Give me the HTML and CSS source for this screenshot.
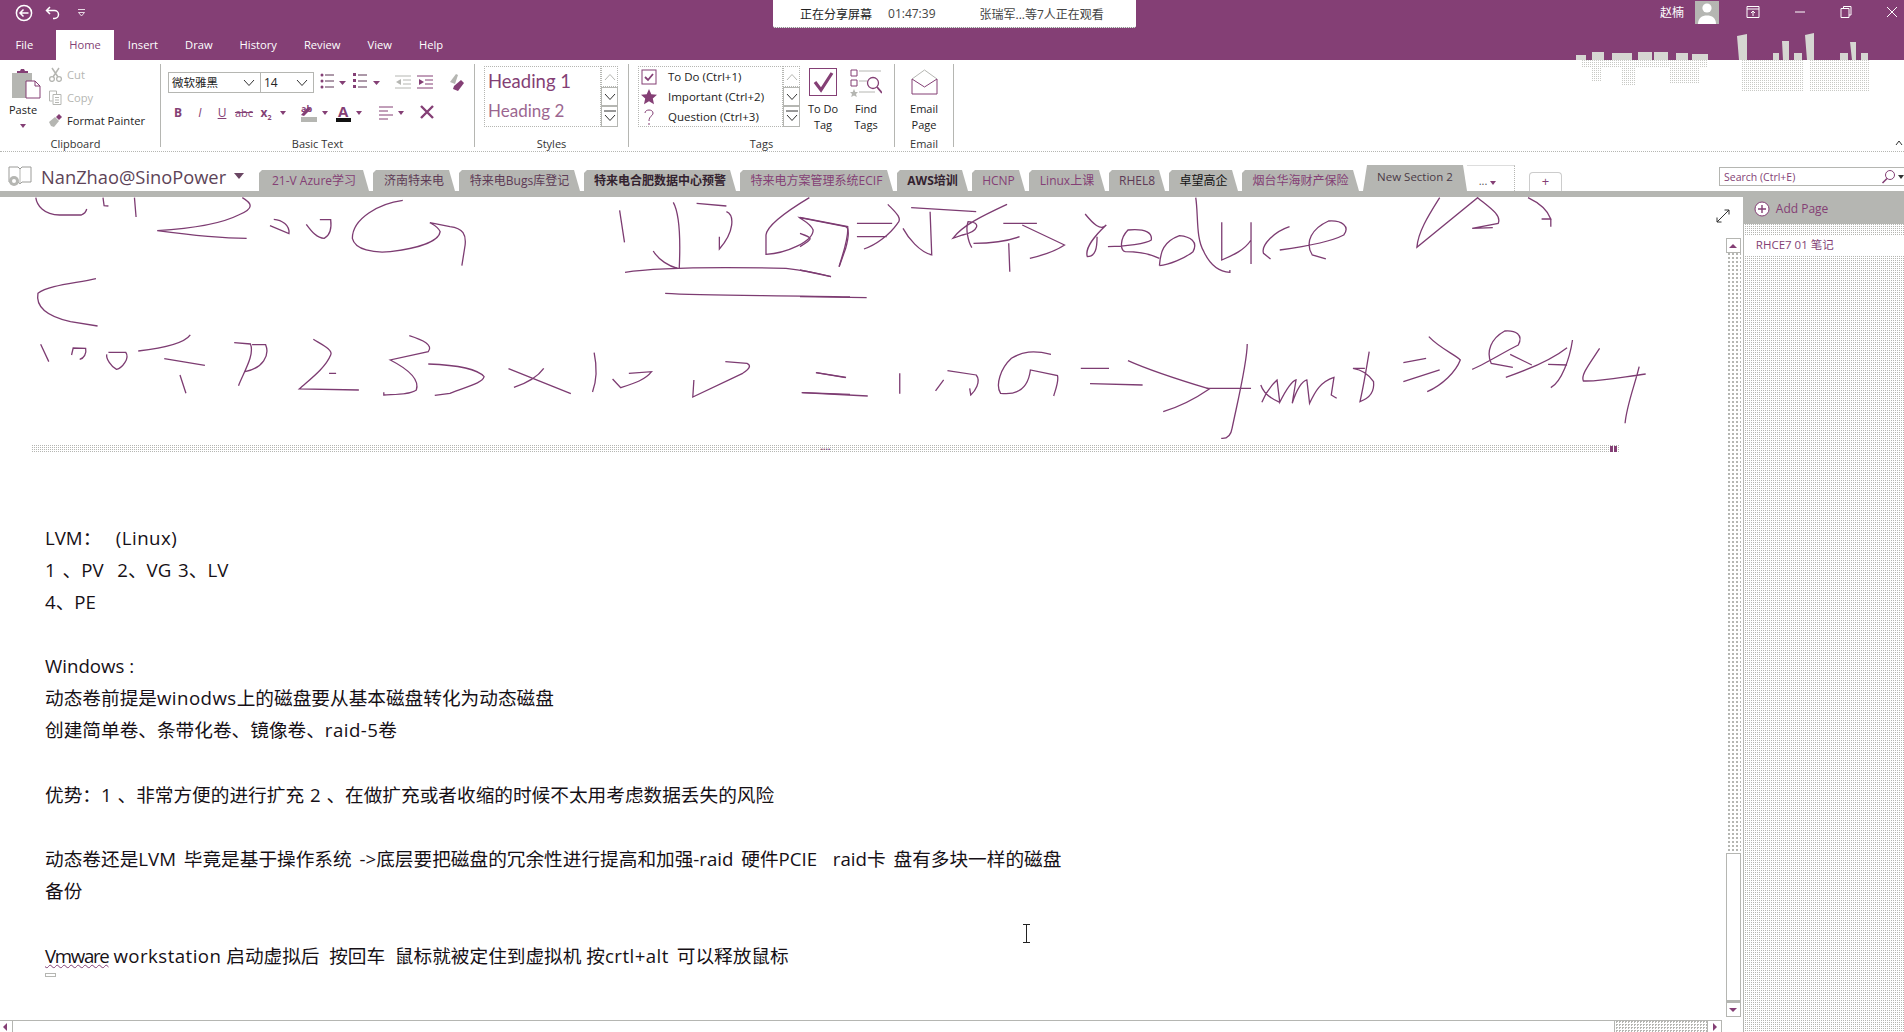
FILE: index.html
```html
<!DOCTYPE html>
<html lang="zh-CN">
  <head>
    <meta charset="UTF-8" />
    <title>RHCE7 01 笔记 - OneNote</title>
    <link rel="stylesheet" href="styles.css">
  </head>
  <body>
    <!-- title bar -->
    <div class="titlebar">
      <div class="quick">
        <svg class="qa-back" width="18" height="18" viewBox="0 0 18 18"><circle cx="9" cy="9" r="7.6"/><path d="M13.5 9H5.5M8.5 5.5 5 9l3.5 3.5"/></svg>
        <svg class="qa-undo" width="16" height="16" viewBox="0 0 16 16"><path d="M5 2 1.5 5.5 5 9M2 5.5h7.5a4 4 0 0 1 0 8H8"/></svg>
        <svg class="qa-more" width="10" height="10" viewBox="0 0 10 10"><path d="M1 1.5h7M1.5 4.5 4.5 8l3-3.5z"/></svg>
      </div>
      <div class="winside">
        <span class="username">赵楠</span>
        <svg class="avatar" width="24" height="23" viewBox="0 0 24 23"><rect width="24" height="23" fill="#b5b6b2"/><circle cx="12" cy="7" r="4.6" fill="#fff"/><path d="M3 23c0-6 4-8.500 9-8.500s9 2.500 9 8.500z" fill="#fff"/></svg>
        <svg class="wbtn wbtn-first" width="14" height="14" viewBox="0 0 14 14"><path d="M1 1.500h12v11H1zM1 4h12M7 11V6M5 8l2-2 2 2"/></svg>
        <svg class="wbtn" width="12" height="14" viewBox="0 0 12 14"><path d="M1 7h10"/></svg>
        <svg class="wbtn" width="12" height="14" viewBox="0 0 12 14"><path d="M1 3.500h8v9H1zM3.500 3.500V1.500H11v8.500H9"/></svg>
        <svg class="wbtn" width="12" height="14" viewBox="0 0 12 14"><path d="M1 2l10 10M11 2 1 12"/></svg>
      </div>
    </div>
    <div class="share">
      <span class="share-a">正在分享屏幕</span>
      <span class="share-b">01:47:39</span>
      <span class="share-c">张瑞军...等7人正在观看</span>
    </div>
    <svg class="watermark" width="310" height="64" viewBox="0 0 310 64">
      <defs>
        <pattern id="wm" width="2" height="2" patternUnits="userSpaceOnUse"><rect width="1" height="1" fill="#c8c9c5"/></pattern>
      </defs>
      <g fill="#d6d6d2">
        <path d="M167 6l10-2v26h-8zM212 11h7v19h-6zM203 23h6v7h-6zM224 23h8v7h-8zM235 5l9-2v27h-7zM270 23h8v7h-8zM280 12h6v18h-4zM291 23h7v7h-7z"/>
        <path d="M6 25h10v5H6zM22 22h12v8H22zM42 23h20v7H42zM68 22h14v8H68zM84 22h14v8H84zM106 23h12v7h-12zM122 24h16v6h-16z"/>
      </g>
      <g fill="url(#wm)">
        <path d="M171 30h62v32h-62zM240 30h60v32h-60z"/>
        <path d="M12 30h126v7H12zM22 37h10v14H22zM52 37h14v18H52zM100 37h30v16h-30z"/>
      </g>
    </svg>

    <nav class="menubar">
      <a class="menu menu-file">File</a>
      <a class="menu menu-active">Home</a>
      <a class="menu">Insert</a>
      <a class="menu">Draw</a>
      <a class="menu">History</a>
      <a class="menu">Review</a>
      <a class="menu">View</a>
      <a class="menu">Help</a>
    </nav>

    <!-- ribbon -->
    <div class="ribbon">
      <section class="group group-clip">
        <div class="group-body">
          <div class="paste">
            <svg width="30" height="31" viewBox="0 0 30 31">
              <rect x="1" y="5" width="20" height="25" fill="#b5b6b2"/>
              <path d="M6 5V3h3l1-2h3l1 2h3v2z" fill="#843f75"/>
              <path d="M15 13h9l5 5v12H15z" fill="#fff" stroke="#843f75"/>
              <path d="M24 13v5h5" fill="none" stroke="#843f75"/>
            </svg>
            <span class="paste-label">Paste</span>
            <i class="caret caret-paste"></i>
          </div>
          <div class="clip-list">
            <div class="clip-row is-off">
              <svg width="15" height="15" viewBox="0 0 15 15"><path d="M4 1l6 9M11 1 5 10" stroke="#b5b6b2" stroke-width="1.500" fill="none"/><circle cx="4" cy="12" r="2.400" fill="none" stroke="#b5b6b2" stroke-width="1.300"/><circle cx="11" cy="12" r="2.400" fill="none" stroke="#b5b6b2" stroke-width="1.300"/></svg>
              <span>Cut</span>
            </div>
            <div class="clip-row is-off">
              <svg width="15" height="15" viewBox="0 0 15 15"><path d="M1.500 1h7v3M1.500 1v10h3M5 4.500h8v10H5zM7 7.500h4M7 10h4M7 12.500h4" fill="none" stroke="#b5b6b2"/></svg>
              <span>Copy</span>
            </div>
            <div class="clip-row">
              <svg width="15" height="15" viewBox="0 0 15 15"><path d="M1 9l6-5 4 4-5 6-3-1z" fill="#b5b6b2"/><path d="M8 4l3-3 3 3-3 3z" fill="#843f75"/></svg>
              <span>Format Painter</span>
            </div>
          </div>
        </div>
        <div class="group-label label-clip">Clipboard</div>
      </section>

      <section class="group group-text">
        <div class="group-body text-body">
          <div class="text-row1">
            <div class="combo combo-font"><span>微软雅黑</span><svg width="12" height="8" viewBox="0 0 12 8"><path d="M1 1l5 5.500L11 1"/></svg></div>
            <div class="combo combo-size"><span>14</span><svg width="12" height="8" viewBox="0 0 12 8"><path d="M1 1l5 5.500L11 1"/></svg></div>
            <svg class="strip" width="146" height="21" viewBox="0 0 146 21">
              <g fill="#843f75">
                <circle cx="2" cy="3" r="1.500"/><circle cx="2" cy="9" r="1.500"/><circle cx="2" cy="15" r="1.500"/>
                <path d="M19 9h7l-3.500 4zM53 9h7l-3.500 4z"/>
                <rect x="33" y="1" width="3" height="3"/><rect x="33" y="7" width="3" height="3"/><rect x="33" y="13" width="3" height="3"/>
              </g>
              <path d="M5 3h9M5 9h9M5 15h9M38 3h9M38 9h9M38 15h9" stroke="#5b3352"/>
              <path d="M75 4h16M83 8h8M83 12h8M75 16h16" stroke="#b5b6b2"/>
              <path d="M81 7 76 10l5 3z" fill="#b5b6b2"/>
              <path d="M97 4h16M105 8h8M105 12h8M97 16h16" stroke="#843f75"/>
              <path d="M99 7l5 3-5 3z" fill="#843f75"/>
              <path d="M130 10l6-8 2 1-3 9z" fill="#b5b6b2"/>
              <path d="M134 14l7-6 3 3-6 8-5-2z" fill="#843f75"/>
            </svg>
          </div>
          <div class="text-row2">
            <span class="fmt fmt-b">B</span>
            <span class="fmt fmt-i">I</span>
            <span class="fmt fmt-u">U</span>
            <span class="fmt fmt-s">abc</span>
            <span class="fmt fmt-x">x<sub>2</sub></span>
            <svg class="strip strip-tall" width="162" height="30" viewBox="0 -10 162 30">
              <g fill="#843f75">
                <path d="M3 7h6l-3 4zM45 7h6l-3 4zM79 7h6l-3 4zM121 7h6l-3 4z"/>
                <path d="M31 3l3 2-7 7-3-1z"/>
              </g>
              <rect x="24" y="13" width="16" height="5" fill="#b5b6b2"/>
              <text x="24" y="8" class="strip-txt">ab</text>
              <text x="61" y="13" class="strip-a">A</text>
              <rect x="59" y="14" width="15" height="4" fill="#111"/>
              <path d="M102 3h14M102 7h9M102 11h14M102 15h9" stroke="#843f75"/>
              <path d="M144 2l12 12M156 2l-12 12" stroke="#843f75" stroke-width="2.400"/>
            </svg>
          </div>
        </div>
        <div class="group-label">Basic Text</div>
      </section>

      <section class="group group-styles">
        <div class="group-body gallery-wrap">
          <div class="gallery gallery-styles">
            <div class="h1">Heading 1</div>
            <div class="h2">Heading 2</div>
          </div>
          <div class="spin">
            <div class="spin-up"><svg width="12" height="8" viewBox="0 0 12 8"><path d="M1 7l5-5.500L11 7"/></svg></div>
            <div class="spin-dn"><svg width="12" height="8" viewBox="0 0 12 8"><path d="M1 1l5 5.500L11 1"/></svg></div>
            <div class="spin-more"><svg width="12" height="13" viewBox="0 0 12 13"><path d="M0 1h12M1 5l5 5.500L11 5"/></svg></div>
          </div>
        </div>
        <div class="group-label">Styles</div>
      </section>

      <section class="group group-tags">
        <div class="group-body">
          <div class="gallery-wrap tag-wrap">
            <div class="gallery gallery-tags">
              <div class="tag-row">
                <svg width="16" height="16" viewBox="0 0 16 16"><rect x="1" y="1" width="14" height="14" fill="#fff" stroke="#843f75"/><path d="M4 8l3 3 5-6" fill="none" stroke="#843f75" stroke-width="1.800"/></svg>
                <span>To Do (Ctrl+1)</span>
              </div>
              <div class="tag-row">
                <svg width="16" height="16" viewBox="0 0 16 16"><path d="M8 0l2.300 5.200 5.700.6-4.200 3.800L13 15.200 8 12.300 3 15.200l1.200-5.600L0 5.800l5.700-.6z" fill="#843f75"/></svg>
                <span>Important (Ctrl+2)</span>
              </div>
              <div class="tag-row">
                <svg width="16" height="16" viewBox="0 0 16 16"><path d="M4 4c0-4 8-4 8 0 0 3-4 3-4 8M8 14v2" fill="none" stroke="#843f75"/></svg>
                <span>Question (Ctrl+3)</span>
              </div>
            </div>
            <div class="spin">
              <div class="spin-up"><svg width="12" height="8" viewBox="0 0 12 8"><path d="M1 7l5-5.500L11 7"/></svg></div>
              <div class="spin-dn"><svg width="12" height="8" viewBox="0 0 12 8"><path d="M1 1l5 5.500L11 1"/></svg></div>
              <div class="spin-more"><svg width="12" height="13" viewBox="0 0 12 13"><path d="M0 1h12M1 5l5 5.500L11 5"/></svg></div>
            </div>
          </div>
          <div class="big-btn btn-todo">
            <svg width="28" height="28" viewBox="0 0 28 28"><rect x=".5" y=".5" width="27" height="27" fill="#fff" stroke="#843f75"/><path d="M6 14l6 8L23 5" fill="none" stroke="#843f75" stroke-width="3.200"/></svg>
            <span>To Do<br>Tag</span>
          </div>
          <div class="big-btn btn-find">
            <svg width="32" height="30" viewBox="0 0 32 30">
              <path d="M1 3h6v6H1zM1 13h6v6H1z" fill="#fff" stroke="#843f75"/>
              <path d="M9 4h22M9 14h8M9 25h16" stroke="#b5b6b2"/>
              <path d="M4 22l1.300 3H8l-2 2 .8 3L4 28.500 1.200 30 2 27l-2-2h2.700z" fill="#b5b6b2"/>
              <circle cx="23" cy="16" r="5.500" fill="#fff" stroke="#843f75" stroke-width="1.300"/>
              <path d="M27 20l5 6" stroke="#843f75" stroke-width="1.800"/>
            </svg>
            <span>Find<br>Tags</span>
          </div>
        </div>
        <div class="group-label">Tags</div>
      </section>

      <section class="group group-email">
        <div class="group-body">
          <div class="big-btn btn-email">
            <svg width="27" height="26" viewBox="0 0 27 26"><path d="M1 10 13.500 1 26 10" fill="none" stroke="#b5b6b2"/><path d="M1 10v15h25V10" fill="none" stroke="#843f75"/><path d="M1 10l12.500 8L26 10" fill="none" stroke="#843f75"/></svg>
            <span>Email<br>Page</span>
          </div>
        </div>
        <div class="group-label">Email</div>
      </section>
      <div class="ribbon-rest">
        <svg width="8" height="6" viewBox="0 0 8 6"><path d="M1 5l3-4 3 4" fill="none" stroke="#333"/></svg>
      </div>
    </div>

    <!-- notebook + section tabs -->
    <div class="notebar">
      <div class="notebook">
        <svg width="24" height="22" viewBox="0 0 24 22"><path d="M1 2h9l2 2 2-2h9v15H14l-2 2-2-2H1z" fill="#fff" stroke="#9b9b98"/><path d="M12 4v15" stroke="#b5b6b2"/><circle cx="6" cy="16" r="5" fill="#b5b6b2"/><circle cx="6" cy="16" r="2" fill="#fff"/></svg>
        <span class="nb-name">NanZhao@SinoPower</span>
        <i class="caret caret-nb"></i>
      </div>
      <div class="sections">
        <div class="sec sec-p">21-V Azure学习</div>
        <div class="sec sec-d">济南特来电</div>
        <div class="sec sec-d">特来电Bugs库登记</div>
        <div class="sec sec-k">特来电合肥数据中心预警</div>
        <div class="sec sec-p">特来电方案管理系统ECIF</div>
        <div class="sec sec-k">AWS培训</div>
        <div class="sec sec-p">HCNP</div>
        <div class="sec sec-p">Linux上课</div>
        <div class="sec sec-d">RHEL8</div>
        <div class="sec sec-b">卓望高企</div>
        <div class="sec sec-p">烟台华海财产保险</div>
        <div class="sec sec-cur">New Section 2</div>
        <div class="sec-more">... <i class="caret"></i></div>
        <div class="sec-add">+</div>
      </div>
      <div class="search">
        <span>Search (Ctrl+E)</span>
        <svg width="15" height="15" viewBox="0 0 15 15"><circle cx="9" cy="6" r="4.500" fill="none" stroke="#843f75"/><path d="M6 9.500 1.500 14" stroke="#843f75" stroke-width="1.600"/></svg>
        <i class="caret caret-search"></i>
      </div>
    </div>
    <div class="band"></div>

    <div class="main">
      <div class="doc">
        <svg class="ink" width="1726" height="248" viewBox="0 197 1726 248">
          <g transform="translate(0 195) scale(.5421 .3333)">
            <path d="M66 8C68 30 80 60 110 60L150 60Q158 55 160 42M190 8L192 32 200 33M248 8L251 66"/>
            <path d="M447 8C465 25 470 40 440 60 410 85 360 100 290 107 340 118 400 130 455 130"/>
            <path d="M505 73C520 75 535 90 533 116L498 92M565 88C575 110 585 130 598 130 610 120 612 100 610 74L590 74"/>
            <path d="M743 16C700 25 650 70 650 130 655 165 690 175 720 170 770 160 810 140 812 110 808 95 795 85 793 83L830 95C855 100 860 120 858 150L852 212"/>
            <path d="M1143 46L1152 142M1242 22C1255 60 1255 150 1253 220M1205 168C1215 195 1235 215 1250 220M1153 232C1200 220 1300 215 1450 220 1480 225 1510 235 1533 245M1285 25L1340 33M1340 50C1355 60 1355 110 1327 162L1327 125"/>
            <path d="M1493 8C1450 50 1415 90 1413 120L1413 178C1450 175 1500 140 1500 105 1495 85 1480 75 1475 68L1560 95C1568 100 1565 130 1560 160L1548 215"/>
            <path d="M1227 295C1300 303 1450 300 1568 306"/>
            <path d="M177 251C140 265 90 270 70 295 65 340 90 365 130 380L180 393"/>
            <path d="M75 448L90 500M132 480L135 459 158 460C160 475 155 490 147 493M200 472L232 472C240 490 225 520 215 523 205 515 195 490 197 478M255 468C300 460 340 445 351 420M303 491L378 511M332 540L343 595"/>
            <path d="M432 443L462 447C470 480 450 530 440 572M465 449L490 449C498 480 485 520 452 530"/>
            <path d="M578 433C595 450 615 465 610 480 600 520 570 555 552 582L662 585M607 535L620 535"/>
            <path d="M755 422C780 435 800 450 790 470L720 495C750 520 775 550 768 585 755 600 730 598 708 600L708 592"/>
            <path d="M790 507C840 510 880 520 893 545 890 565 860 575 830 595L802 601"/>
            <path d="M938 521L1053 596M1003 520C990 550 970 565 948 577M1096 473C1102 520 1100 560 1093 591"/>
            <path d="M1130 552L1145 578C1170 565 1190 555 1202 530L1160 535M1280 555L1278 606 1370 535C1385 520 1385 510 1378 505L1338 500"/>
            <path d="M1505 533L1560 548M1480 593L1568 598"/>
          </g>
          <g transform="translate(800 195) scale(.5421 .3333)">
            <path d="M0 67L88 95C90 130 80 170 72 215M0 115C25 130 25 130 0 155M0 225L57 245M0 305L123 308"/>
            <path d="M105 85L170 85M105 125L160 125M162 28C175 50 190 70 180 85 165 120 140 150 118 162"/>
            <path d="M205 38L325 50M240 50L243 180C220 170 200 130 190 100"/>
            <path d="M382 28C340 60 300 90 282 130L300 120C330 110 335 80 310 80 305 100 310 140 317 158M320 145C350 145 380 140 405 125M375 85L437 85M385 145L387 230"/>
            <path d="M410 90L488 150C470 170 450 180 424 190"/>
            <path d="M526 57C540 85 555 110 565 90 545 120 525 160 530 185 545 185 548 160 548 125"/>
            <path d="M568 155C600 155 640 145 648 135 650 115 640 100 605 105 590 130 590 165 600 170 630 170 650 180 663 190"/>
            <path d="M663 212C665 170 670 140 700 122 720 125 735 140 725 170 710 190 680 210 663 212M730 8C735 60 730 130 745 170 755 205 770 230 793 232L793 225"/>
            <path d="M778 82L778 195C800 180 820 165 832 135M832 82L832 207"/>
            <path d="M903 95C875 110 850 150 855 175L868 192"/>
            <path d="M885 165C930 155 980 140 1003 120 1015 95 1000 75 975 78 945 100 930 140 945 180L970 192"/>
            <path d="M1180 8C1160 60 1140 110 1138 157L1250 8C1270 35 1295 60 1288 85L1240 100 1278 98M1343 8C1365 25 1380 50 1385 72L1368 72M1385 72L1385 95"/>
            <path d="M30 533L85 547M3 593L125 603M184 535L184 596"/>
            <path d="M250 588L265 555M272 527L325 540C335 560 322 590 315 600L313 580"/>
            <path d="M463 478C430 465 410 470 390 490 370 520 360 570 370 595 395 600 420 590 425 525L475 542C478 560 470 590 468 603"/>
            <path d="M518 520L570 520M535 566L632 570M605 497C650 530 700 555 755 582 730 610 700 635 670 650"/>
            <path d="M825 447C825 500 810 600 797 700 795 720 790 732 777 730M750 580L832 580"/>
            <path d="M850 570C855 595 870 612 885 622M852 622C860 590 870 570 880 555L885 622C895 590 905 560 915 555L908 625C915 590 925 560 935 555L940 625C950 590 960 560 985 547L980 600 990 610"/>
            <path d="M1050 470C1045 520 1040 570 1033 620 1050 610 1060 590 1058 560 1050 540 1040 525 1020 520L1042 520"/>
            <path d="M1113 503L1155 490M1113 560L1180 525M1160 425C1180 460 1210 480 1218 495 1210 530 1185 570 1157 590"/>
            <path d="M1240 523C1260 510 1300 470 1325 450 1335 420 1320 405 1300 408 1275 430 1265 470 1275 505L1315 517"/>
            <path d="M1310 478L1350 510M1302 547C1350 520 1390 490 1415 458M1425 435C1420 490 1405 560 1385 578M1380 508L1415 510"/>
            <path d="M1475 460C1455 510 1440 540 1445 558 1480 560 1520 545 1560 537M1548 515C1540 570 1525 630 1522 685"/>
          </g>
        </svg>
        <div class="dragbar">
          <span></span>
          <span class="drag-dots">....</span>
          <span class="drag-end"><i></i><i></i></span>
        </div>
        <div class="note">
          <p>LVM：   <span class="wide-ltr">(Linux)</span></p>
          <p class="sp-mid">1 、PV  2、VG 3、LV</p>
          <p>4、PE</p>
          <p>&nbsp;</p>
          <p>Windows :</p>
          <p>动态卷前提是<span class="wide-ltr">winodws</span>上的磁盘要从基本磁盘转化为动态磁盘</p>
          <p>创建简单卷、条带化卷、镜像卷、<span class="wide-ltr">raid-5</span>卷</p>
          <p>&nbsp;</p>
          <p class="sp-slim">优势：1 、非常方便的进行扩充 2 、在做扩充或者收缩的时候不太用考虑数据丢失的风险</p>
          <p>&nbsp;</p>
          <p class="sp-wide">动态卷还是LVM 毕竟是基于操作系统 -&gt;底层要把磁盘的冗余性进行提高和加强-raid 硬件PCIE  raid卡 盘有多块一样的磁盘</p>
          <p>备份</p>
          <p>&nbsp;</p>
          <p><span class="typo">Vmware</span> <span class="wk">workstation</span> 启动虚拟后  按回车  鼠标就被定住到虚拟机 按<span class="wide-ltr">crtl+alt</span><span class="sp-wide"> </span>可以释放鼠标</p>
          <div class="note-mark"></div>
        </div>
        <svg class="ibeam" width="9" height="19" viewBox="0 0 9 19"><path d="M1 .5h7M4.500.5v18M1 18.500h7" fill="none" stroke="#222"/></svg>
        <div class="hscroll">
          <div class="hs-left"><i></i></div>
          <div class="hs-thumb"></div>
          <div class="hs-track"></div>
          <div class="hs-right"><i></i></div>
        </div>
      </div>
      <div class="vscroll">
        <svg class="expand" width="14" height="14" viewBox="0 0 14 14"><path d="M13 1 1 13M8.500 1H13v4.500M1 8.500V13h4.500" fill="none" stroke="#333"/></svg>
        <div class="vs-up"><i></i></div>
        <div class="vs-track"></div>
        <div class="vs-thumb"></div>
        <div class="vs-down"><i></i></div>
      </div>
      <aside class="pages">
        <div class="addpage">
          <svg width="16" height="16" viewBox="0 0 16 16"><circle cx="8" cy="8" r="7" fill="#fff" stroke="#843f75"/><path d="M8 4v8M4 8h8" stroke="#843f75" stroke-width="1.400"/></svg>
          <span>Add Page</span>
        </div>
        <div class="pages-strip"></div>
        <div class="page-item">RHCE7 01 笔记</div>
        <div class="pages-rest"></div>
      </aside>
    </div>
  </body>
</html>
```
FILE: styles.css
```css
* {
  box-sizing: border-box;
}
html,
body {
  margin: 0;
  width: 1904px;
  height: 1032px;
  overflow: hidden;
  background: #fff;
}
body {
  position: relative;
  display: flex;
  flex-direction: column;
  font-family: "Open Sans", "Noto Sans CJK SC", sans-serif;
  font-size: 11px;
  color: #222;
}
svg {
  display: block;
  flex: none;
}
.caret {
  display: inline-block;
  width: 0;
  height: 0;
  border-left: 3.5px solid transparent;
  border-right: 3.5px solid transparent;
  border-top: 4px solid #843f75;
}

/* title bar */
.titlebar {
  height: 30px;
  background: #843f75;
  display: flex;
  justify-content: space-between;
  color: #fff;
}
.quick {
  display: flex;
  align-items: center;
  height: 26px;
  padding-left: 15px;
}
.quick svg {
  fill: none;
  stroke: #fff;
  stroke-width: 1.5;
}
.qa-undo {
  margin-left: 12px;
}
.qa-more {
  margin-left: 16px;
}
.qa-more path {
  stroke-width: 0.8;
}
.winside {
  display: flex;
  align-items: center;
  height: 24px;
  padding-right: 6px;
}
.username {
  font-size: 12px;
  margin-right: 11px;
}
.wbtn {
  margin-left: 34px;
  fill: none;
  stroke: #fff;
}
.wbtn-first {
  margin-left: 27px;
}
.share {
  position: absolute;
  left: 773px;
  top: 0;
  width: 363px;
  height: 28px;
  background: #fff;
  border-bottom: 1px dotted #777;
  border-radius: 0 0 2px 2px;
  display: flex;
  align-items: center;
  padding-left: 27px;
  font-size: 12px;
  color: #222;
}
.share-b {
  margin-left: 16px;
  color: #444;
}
.share-c {
  margin-left: 44px;
  color: #444;
}
.watermark {
  position: absolute;
  left: 1570px;
  top: 30px;
}

.menubar {
  height: 30px;
  background: #843f75;
  display: flex;
  padding-left: 2px;
}
.menu {
  padding: 0 13.5px;
  line-height: 30px;
  font-size: 11.2px;
  color: #fff;
}
.menu-file {
  margin-right: 9px;
}
.menu-active {
  background: #fff;
  color: #843f75;
}

/* ribbon */
.ribbon {
  height: 92px;
  display: flex;
  border-bottom: 1px dotted #b5b6b2;
}
.group {
  height: 83px;
  margin-top: 4px;
  display: flex;
  flex-direction: column;
  border-right: 1px solid #b5b6b2;
}
.group-body {
  flex: 1;
  display: flex;
  min-height: 0;
}
.group-label {
  height: 14px;
  line-height: 14px;
  margin-bottom: -4px;
  text-align: center;
  font-size: 11px;
  color: #333;
}
.label-clip {
  padding-right: 9px;
}
.group-clip {
  width: 161px;
}
.group-text {
  width: 314px;
}
.group-styles {
  width: 154px;
}
.group-tags {
  width: 266px;
}
.group-email {
  width: 59px;
}
.ribbon-rest {
  flex: 1;
  display: flex;
  align-items: flex-end;
  justify-content: flex-end;
  padding: 0 1px 5px 0;
  background: radial-gradient(#bbb 0.6px, transparent 0.8px) 0 0 / 13px 8px;
}

/* clipboard */
.paste {
  width: 48px;
  padding: 4px 0 0 11px;
  display: flex;
  flex-direction: column;
}
.paste-label {
  margin: 2px 0 0 -2px;
  line-height: 18px;
  font-size: 11px;
}
.caret-paste {
  margin: 5px 0 0 9px;
  border-left-width: 3px;
  border-right-width: 3px;
}
.clip-list {
  margin-top: -1px;
  font-size: 11.2px;
}
.clip-row {
  height: 23px;
  display: flex;
  align-items: center;
  gap: 4px;
}
.is-off {
  color: #b5b6b2;
}

/* basic text */
.text-body {
  flex-direction: column;
  padding: 8px 0 0 7px;
}
.text-row1 {
  display: flex;
  height: 21px;
}
.combo {
  height: 21px;
  border: 1px solid #b5b6b2;
  display: flex;
  align-items: center;
  justify-content: space-between;
  padding: 0 5px 0 3px;
  font-size: 12px;
  line-height: 15px;
}
.combo svg {
  fill: none;
  stroke: #333;
}
.combo-font {
  width: 93px;
  font-size: 11.500px;
}
.combo-size {
  width: 54px;
  margin-left: -1px;
}
.text-row1 .strip {
  margin-left: 6px;
}
.text-row2 {
  display: flex;
  margin-top: 11px;
  height: 18px;
  margin-left: -1px;
}
.strip-tall {
  margin-top: -10px;
}
.fmt {
  width: 22px;
  text-align: center;
  line-height: 18px;
  font-size: 12px;
  color: #843f75;
}
.fmt sub {
  font-size: 7px;
  line-height: 0;
}
.fmt-b,
.fmt-x {
  font-weight: 700;
}
.fmt-i {
  font-style: italic;
}
.fmt-u {
  text-decoration: underline;
}
.fmt-s {
  text-decoration: line-through;
  font-size: 11px;
}
.strip-txt {
  font: 700 9px "Open Sans", sans-serif;
  fill: #843f75;
}
.strip-a {
  font: 700 15px "Open Sans", sans-serif;
  fill: #843f75;
}

/* galleries */
.gallery-wrap {
  display: flex;
  padding-top: 2px;
}
.group-styles .gallery-wrap {
  padding-left: 9px;
}
.gallery {
  height: 61px;
  border: 1px dotted #b5b6b2;
}
.gallery-styles {
  width: 117px;
  padding-left: 3px;
  color: #843f75;
  font-family: Lato, "Noto Sans CJK SC", sans-serif;
}
.h1 {
  font-size: 18.5px;
  line-height: 28px;
}
.h2 {
  font-size: 17px;
  line-height: 31px;
  opacity: 0.8;
}
.spin {
  width: 17px;
  height: 61px;
  display: flex;
  flex-direction: column;
}
.spin div {
  display: flex;
  align-items: center;
  justify-content: center;
  border: 1px solid #b5b6b2;
}
.spin svg {
  fill: none;
  stroke: #333;
}
.spin .spin-up {
  height: 21px;
  border: 1px dotted #b5b6b2;
}
.spin .spin-up svg {
  stroke: #b5b6b2;
}
.spin-dn {
  height: 19px;
}
.spin-more {
  height: 21px;
}
.tag-wrap {
  padding-left: 9px;
}
.gallery-tags {
  width: 145px;
  padding: 0 0 0 2px;
}
.tag-row {
  height: 20px;
  display: flex;
  align-items: center;
  gap: 11px;
  font-size: 11.5px;
}
.tag-row span {
  margin-top: -2px;
}
.big-btn {
  display: flex;
  flex-direction: column;
  align-items: center;
  line-height: 16px;
  text-align: center;
}
.big-btn svg {
  margin-bottom: 5px;
}
.btn-todo {
  width: 36px;
  margin-left: 5px;
  padding-top: 4px;
}
.btn-find {
  width: 36px;
  margin-left: 7px;
  padding-top: 3px;
}
.btn-find svg {
  margin-bottom: 4px;
}
.btn-email {
  width: 59px;
  padding-top: 5px;
}
.btn-email svg {
  margin-bottom: 6px;
}

/* notebook bar */
.notebar {
  height: 39px;
  display: flex;
  align-items: flex-end;
  position: relative;
}
.notebook {
  width: 259px;
  height: 25px;
  margin-bottom: 2px;
  display: flex;
  align-items: center;
  padding: 0 0 1px 8px;
  color: #5d4458;
}
.nb-name {
  margin-left: 9px;
  font-size: 18.3px;
  white-space: nowrap;
}
.caret-nb {
  margin-left: 8px;
  border-left-width: 5px;
  border-right-width: 5px;
  border-top-width: 6px;
  border-top-color: #6a4663;
}
.sections {
  display: grid;
  grid-template-columns: 110px 82px 121px 152px 153px 71px 53px 76px 56px 69px 117px 104px 44px 33px;
  column-gap: 4px;
  align-items: end;
}
.sec {
  height: 21px;
  line-height: 21px;
  text-align: center;
  background: #b5b6b2;
  font-size: 12px;
  white-space: nowrap;
  clip-path: polygon(0 3px, 3px 0, calc(100% - 6px) 0, 100% 100%, 0 100%);
}
.sec-p {
  color: #843f75;
}
.sec-d {
  color: #5d3a55;
}
.sec-k {
  color: #33222f;
  font-weight: 700;
}
.sec-b {
  color: #111;
}
.sec-cur {
  height: 26px;
  line-height: 24px;
  font-size: 11.500px;
  color: #4a3a46;
  clip-path: polygon(0 100%, 4px 0, calc(100% - 4px) 0, 100% 100%);
}
.sec-more {
  height: 26px;
  margin-left: -4px;
  padding-top: 7px;
  padding-right: 6px;
  text-align: center;
  border-top: 1px solid #ddd;
  border-right: 1px dotted #b5b6b2;
  font-size: 11px;
  color: #555;
}
.sec-add {
  height: 19px;
  margin-left: 10px;
  width: 33px;
  border: 1px solid #ccc;
  border-bottom: 0;
  border-radius: 4px 4px 0 0;
  line-height: 17px;
  text-align: center;
  color: #843f75;
  font-size: 13px;
}
.search {
  position: absolute;
  left: 1719px;
  top: 15px;
  width: 185px;
  height: 19px;
  border: 1px solid #b5b6b2;
  border-right: 0;
  display: flex;
  align-items: center;
  padding-left: 4px;
  color: #843f75;
  font-size: 10.500px;
}
.search svg {
  margin-left: auto;
}
.caret-search {
  margin: 0 0 0 2px;
  border-top-color: #333;
}
.band {
  height: 6px;
  background: #b5b6b2;
}

/* page area */
.main {
  flex: 1;
  display: flex;
  min-height: 0;
}
.doc {
  width: 1726px;
  position: relative;
  display: flex;
  flex-direction: column;
}
.ink {
  fill: none;
  stroke: #7d3c72;
  stroke-width: 1.3;
}
.ink path {
  vector-effect: non-scaling-stroke;
}
.dragbar {
  margin-left: 31px;
  width: 1589px;
  height: 8px;
  display: grid;
  grid-template-columns: 1fr auto 1fr;
  align-items: center;
  background: conic-gradient(#b5b6b2 25%, #fff 0) 0 0 / 2px 2px;
}
.drag-dots {
  color: #843f75;
  font: 700 9px/2px "Liberation Sans", sans-serif;
  padding-bottom: 5px;
}
.drag-end {
  justify-self: end;
  display: flex;
  gap: 1px;
  padding-right: 3px;
}
.drag-end i {
  width: 3px;
  height: 6px;
  background: #843f75;
}
.note {
  flex: 1;
  min-height: 0;
  padding: 68.5px 0 0 45px;
  font-size: 18.67px;
  line-height: 32.15px;
  color: #161016;
}
.note p {
  margin: 0;
  white-space: pre;
}
.wide-ltr {
  letter-spacing: 0.45px;
}
.sp-slim {
  word-spacing: 1px;
}
.sp-mid {
  word-spacing: 2px;
}
.sp-wide {
  word-spacing: 3px;
}
.typo {
  letter-spacing: -1.3px;
  text-decoration: underline wavy #843f75 1px;
}
.wk {
  letter-spacing: 0.45px;
}
.note-mark {
  width: 11px;
  height: 4px;
  margin-top: 1px;
  border: 1px solid #b5b6b2;
}
.ibeam {
  position: absolute;
  left: 1022px;
  top: 727px;
}
.hscroll {
  width: 1722px;
  height: 12px;
  display: flex;
  border-top: 1px solid #b5b6b2;
}
.hs-left {
  width: 12px;
  display: flex;
  align-items: center;
  padding-left: 3px;
}
.hs-left i {
  border-top: 4px solid transparent;
  border-bottom: 4px solid transparent;
  border-right: 4px solid #843f75;
}
.hs-thumb {
  width: 1603px;
  border-left: 1px solid #b5b6b2;
  border-right: 1px solid #b5b6b2;
}
.hs-track {
  flex: 1;
  background: conic-gradient(#b5b6b2 25%, #fff 0) 0 0 / 3px 3px;
}
.hs-right {
  width: 15px;
  display: flex;
  align-items: center;
  justify-content: center;
  border-left: 1px solid #b5b6b2;
  border-right: 1px solid #b5b6b2;
}
.hs-right i {
  border-top: 4px solid transparent;
  border-bottom: 4px solid transparent;
  border-left: 4px solid #843f75;
}
.vscroll {
  width: 15px;
  display: flex;
  flex-direction: column;
  padding: 12px 0 15px;
}
.expand {
  margin: 0 0 15px -10px;
}
.vs-up,
.vs-down {
  height: 15px;
  display: flex;
  align-items: center;
  justify-content: center;
  border: 1px solid #b5b6b2;
}
.vs-up i {
  border-left: 4px solid transparent;
  border-right: 4px solid transparent;
  border-bottom: 4px solid #843f75;
}
.vs-down i {
  border-left: 4px solid transparent;
  border-right: 4px solid transparent;
  border-top: 4px solid #843f75;
}
.vs-track {
  flex: 1;
  background: conic-gradient(#b5b6b2 25%, #fff 0) 0 0 / 4px 4px;
}
.vs-thumb {
  height: 149px;
  border: 1px solid #b5b6b2;
  border-bottom-width: 2px;
}
.pages {
  width: 163px;
  margin-left: 2px;
  border-left: 1px solid #b5b6b2;
  display: flex;
  flex-direction: column;
}
.addpage {
  height: 27px;
  background: #b5b6b2;
  display: flex;
  align-items: center;
  gap: 6px;
  padding: 0 0 4px 10px;
  color: #843f75;
  font-size: 12px;
}
.pages-strip {
  height: 11px;
  background: conic-gradient(#b5b6b2 25%, #fff 0) 0 0 / 2px 2px;
}
.page-item {
  height: 21px;
  line-height: 20px;
  padding-left: 12px;
  font-size: 11.500px;
  color: #843f75;
}
.pages-rest {
  flex: 1;
  background: conic-gradient(#b5b6b2 25%, #fff 0) 0 0 / 2px 2px;
}
```
